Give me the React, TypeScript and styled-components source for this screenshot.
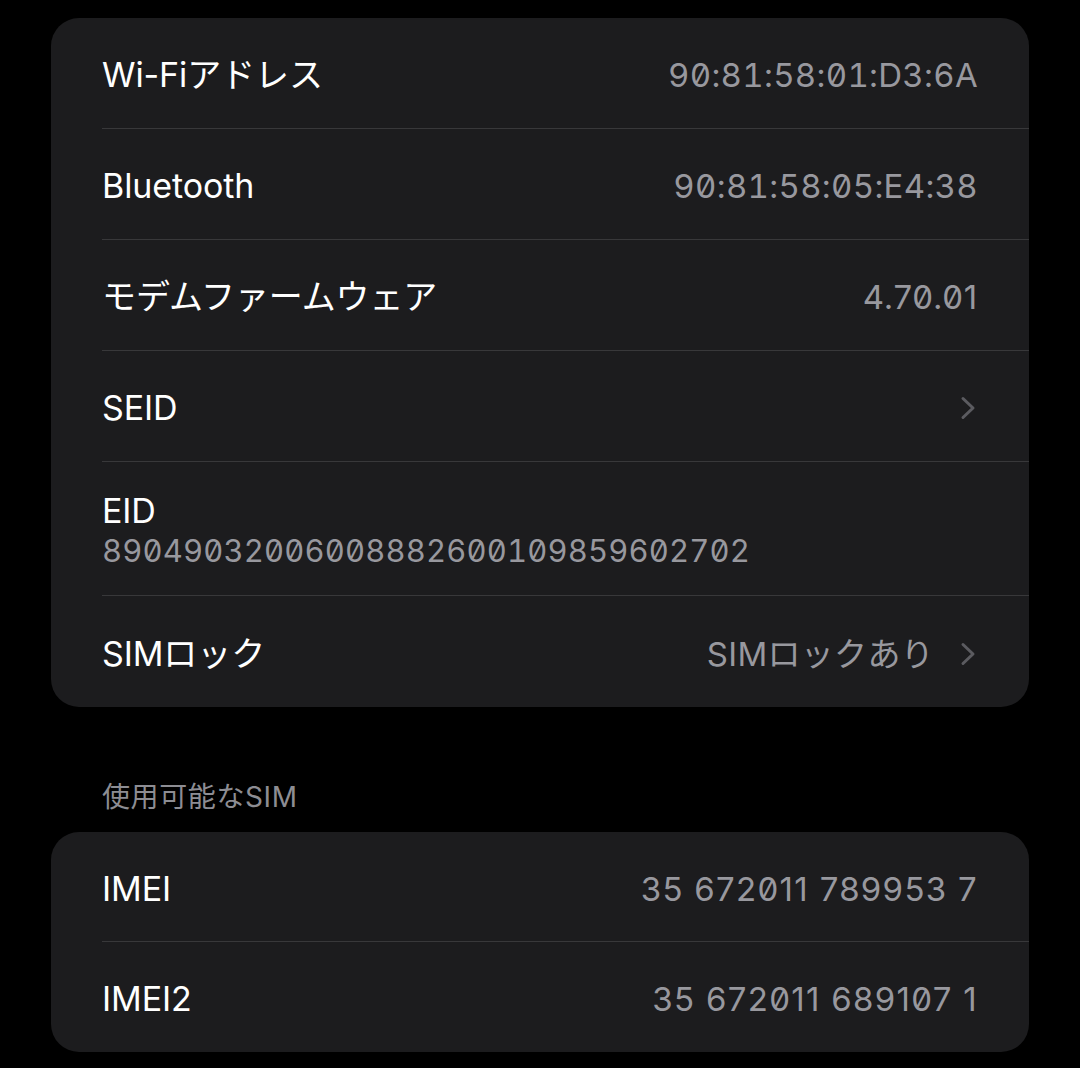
import React, {FC} from 'react';
import styled, {createGlobalStyle} from 'styled-components';

const GlobalStyle = createGlobalStyle`
  html, body {
    margin: 0;
    padding: 0;
    background: #000;
  }
  body {
    font-family: "Inter", "Noto Sans CJK JP", sans-serif;
    -webkit-font-smoothing: antialiased;
  }
`;

const Page = styled.div`
  box-sizing: border-box;
  width: 1080px;
  min-height: 1068px;
  padding: 18px 51px 0;
  background: #000;
`;

const Card = styled.div`
  background: #1c1c1e;
  border-radius: 28px;
  overflow: hidden;
`;

const Row = styled.div`
  padding-left: 51px;
`;

const RowInner = styled.div<{$tall?: boolean; $h?: number}>`
  box-sizing: border-box;
  height: ${(p) => p.$h ?? 111}px;
  display: flex;
  flex-direction: ${(p) => (p.$tall ? 'column' : 'row')};
  align-items: ${(p) => (p.$tall ? 'flex-start' : 'center')};
  justify-content: ${(p) => (p.$tall ? 'center' : 'space-between')};
  padding: 4px 51px 0 0;
  border-bottom: 1px solid #38383a;

  ${Row}:last-child & {
    border-bottom: none;
  }
`;

const Label = styled.span`
  color: #fff;
  font-size: 34px;
  letter-spacing: -0.1px;
  line-height: 40px;
`;

const Value = styled.span<{$prop?: boolean; $ls?: number}>`
  color: #98989e;
  font-size: 33px;
  line-height: 40px;
  font-variant-numeric: ${(p) => (p.$prop ? 'slashed-zero' : 'tabular-nums slashed-zero')};
  font-feature-settings: 'zero' 1;
  letter-spacing: ${(p) => p.$ls ?? 0.3}px;
`;

const SubValue = styled(Value)`
  font-size: 31px;
  letter-spacing: 0.15px;
`;

const Trail = styled.div`
  display: flex;
  align-items: center;
  gap: 26px;
`;

const Chevron = styled.svg`
  width: 16px;
  height: 24px;
  margin-right: 2px;
`;

const SectionHeader = styled.div`
  margin: 72px 0 17px 51px;
  color: #8d8d93;
  font-size: 28px;
  letter-spacing: 0.6px;
  line-height: 36px;
`;

const Arrow: FC = () => (
  <Chevron viewBox="0 0 16 24">
    <path d="M3 2.5 L13 12 L3 21.5" fill="none" stroke="#5b5b60" strokeWidth="3" strokeLinecap="round" strokeLinejoin="round"/>
  </Chevron>
);

interface IItem {
  label: string;
  value?: string;
  arrow?: boolean;
  prop?: boolean;
  ls?: number;
  h?: number;
}

const ListRow: FC<IItem> = ({label, value, arrow, prop, ls, h}) => (
  <Row>
    <RowInner $h={h}>
      <Label>{label}</Label>
      <Trail>
        {value && <Value $prop={prop} $ls={ls}>{value}</Value>}
        {arrow && <Arrow/>}
      </Trail>
    </RowInner>
  </Row>
);

const App: FC = () => (
  <Page>
    <GlobalStyle/>
    <Card>
      <ListRow label="Wi-Fiアドレス" value="90:81:58:01:D3:6A"/>
      <ListRow label="Bluetooth" value="90:81:58:05:E4:38"/>
      <ListRow label="モデムファームウェア" value="4.70.01" prop ls={0.7}/>
      <ListRow label="SEID" arrow/>
      <Row>
        <RowInner $tall $h={134}>
          <Label>EID</Label>
          <SubValue>89049032006008882600109859602702</SubValue>
        </RowInner>
      </Row>
      <ListRow label="SIMロック" value="SIMロックあり" arrow/>
    </Card>
    <SectionHeader>使用可能なSIM</SectionHeader>
    <Card>
      <ListRow label="IMEI" value="35 672011 789953 7" prop ls={1.3} h={110}/>
      <ListRow label="IMEI2" value="35 672011 689107 1" prop ls={1.3} h={110}/>
    </Card>
  </Page>
);

export default App;
